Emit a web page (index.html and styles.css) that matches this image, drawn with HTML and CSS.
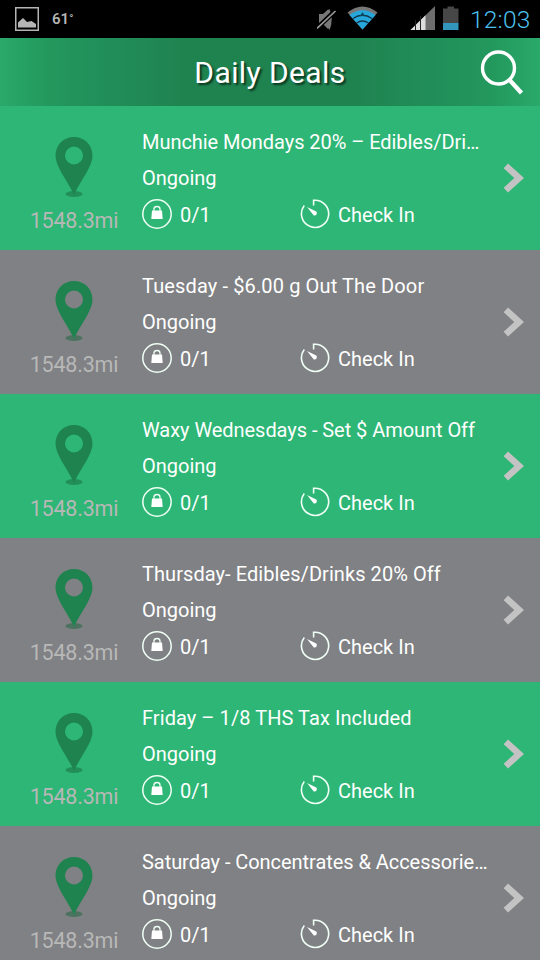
FILE: index.html
```html
<!DOCTYPE html>
<html lang="en">
<head>
<meta charset="utf-8">
<title>Daily Deals</title>
<link rel="stylesheet" href="styles.css">
</head>
<body>
<svg class="defs" aria-hidden="true">
  <symbol id="pin" viewBox="0 0 40 62">
    <ellipse cx="20" cy="58" rx="8.500" ry="3" fill="#17663c" fill-opacity=".5"/>
    <path fill="#1f8350" fill-rule="evenodd" d="M20 1C9.500 1 1.500 9 1.500 19.500C1.500 30 11 41 20 58.500C29 41 38.500 30 38.500 19.500C38.500 9 30.500 1 20 1ZM20 10.500a9 9 0 1 1 0 18a9 9 0 1 1 0-18Z"/>
  </symbol>
  <symbol id="bag" viewBox="0 0 30 30">
    <circle cx="15" cy="15" r="14.200" fill="none" stroke="#effff5" stroke-width="1.500"/>
    <path d="M10 11.500H20L20.700 20H9.300Z" fill="#fff"/>
    <path d="M12 13V10a3 2.500 0 0 1 6 0V13" fill="none" stroke="#effff5" stroke-width="1.300"/>
  </symbol>
  <symbol id="timer" viewBox="0 0 30 30">
    <path d="M13.600 6.500V1.300A13.600 13.600 0 1 1 4.300 6.500" fill="none" stroke="#effff5" stroke-width="1.600"/>
    <path d="M7 8L16.200 12.600A2.300 2.300 0 0 1 13.800 16.400Z" fill="#fff"/>
  </symbol>
  <symbol id="chevron" viewBox="0 0 22 30">
    <path d="M3.800 2.800L17.200 15L3.800 27.200" fill="none" stroke="#c3c3c3" stroke-width="6.500"/>
  </symbol>
</svg>

<div class="status">
  <svg class="picture" viewBox="0 0 24 24"><rect x=".75" y=".75" width="22.500" height="22.500" fill="none" stroke="#b5b5b5" stroke-width="1.500"/><path d="M3 20.500V15.500L8 11L12 15L16.500 14L21 17V20.500Z" fill="#b5b5b5"/></svg>
  <span class="temp">61<span class="degree">°</span></span>
  <svg class="tray" viewBox="0 0 150 28">
    <path d="M2 9H6L11 4.500V24L6 19H2Z M12.500 4Q17 14 12.500 25L11 23V5Z" fill="#777"/>
    <path d="M0 23L18 6" stroke="#000" stroke-width="4.500"/>
    <path d="M0 23.500L18.500 6" stroke="#999" stroke-width="1.700"/>
    <path d="M45.500 24.500L30.500 7.500Q45.500-4.500 60.500 7.500Z" fill="#777"/>
    <path d="M45.500 24.500L32.500 10Q45.500 .5 58.500 10Z" fill="#27a8dd"/>
    <path d="M36 13.500Q45.500 7 55 13.500M39.500 18Q45.500 14 51.500 18" fill="none" stroke="#10384a" stroke-width="1.400"/>
    <path d="M43 11H48L45.500 7Z" fill="#10485f"/>
    <path d="M93.500 25L118 1V25Z" fill="#6d6d6d"/>
    <path d="M93.500 25L108.500 10.300V25Z" fill="#ddd"/>
    <path d="M98.500 15V25M103.500 11V25" stroke="#222" stroke-width="1"/>
    <path d="M126 3.500H130.500V1.500H137V3.500H141.500V18H126Z" fill="#474747"/>
    <path d="M126 18H141.500V25H126Z" fill="#3296bd"/>
  </svg>
  <span class="clock">12:03</span>
</div>

<header class="bar">
  <h1 class="heading">Daily Deals</h1>
  <svg class="search" viewBox="0 0 44 46"><circle cx="18.500" cy="18" r="16" fill="none" stroke="#fff" stroke-width="3.400"/><path d="M29.500 30L41.500 43" stroke="#fff" stroke-width="4.300"/></svg>
</header>

<main class="deals">
  <article class="deal">
    <div class="place"><svg class="pin"><use href="#pin"/></svg><span class="distance">1548.3mi</span></div>
    <div class="info">
      <h2 class="title tight">Munchie Mondays 20% – Edibles/Dri…</h2>
      <p class="when">Ongoing</p>
      <div class="stats"><svg class="icon"><use href="#bag"/></svg><span class="count">0/1</span><svg class="icon"><use href="#timer"/></svg><span class="check">Check In</span></div>
    </div>
    <svg class="chevron"><use href="#chevron"/></svg>
  </article>
  <article class="deal">
    <div class="place"><svg class="pin"><use href="#pin"/></svg><span class="distance">1548.3mi</span></div>
    <div class="info">
      <h2 class="title wide">Tuesday - $6.00 g Out The Door</h2>
      <p class="when">Ongoing</p>
      <div class="stats"><svg class="icon"><use href="#bag"/></svg><span class="count">0/1</span><svg class="icon"><use href="#timer"/></svg><span class="check">Check In</span></div>
    </div>
    <svg class="chevron"><use href="#chevron"/></svg>
  </article>
  <article class="deal">
    <div class="place"><svg class="pin"><use href="#pin"/></svg><span class="distance">1548.3mi</span></div>
    <div class="info">
      <h2 class="title tight">Waxy Wednesdays - Set $ Amount Off</h2>
      <p class="when">Ongoing</p>
      <div class="stats"><svg class="icon"><use href="#bag"/></svg><span class="count">0/1</span><svg class="icon"><use href="#timer"/></svg><span class="check">Check In</span></div>
    </div>
    <svg class="chevron"><use href="#chevron"/></svg>
  </article>
  <article class="deal">
    <div class="place"><svg class="pin"><use href="#pin"/></svg><span class="distance">1548.3mi</span></div>
    <div class="info">
      <h2 class="title loose">Thursday- Edibles/Drinks 20% Off</h2>
      <p class="when">Ongoing</p>
      <div class="stats"><svg class="icon"><use href="#bag"/></svg><span class="count">0/1</span><svg class="icon"><use href="#timer"/></svg><span class="check">Check In</span></div>
    </div>
    <svg class="chevron"><use href="#chevron"/></svg>
  </article>
  <article class="deal">
    <div class="place"><svg class="pin"><use href="#pin"/></svg><span class="distance">1548.3mi</span></div>
    <div class="info">
      <h2 class="title loose">Friday – 1/8 THS Tax Included</h2>
      <p class="when">Ongoing</p>
      <div class="stats"><svg class="icon"><use href="#bag"/></svg><span class="count">0/1</span><svg class="icon"><use href="#timer"/></svg><span class="check">Check In</span></div>
    </div>
    <svg class="chevron"><use href="#chevron"/></svg>
  </article>
  <article class="deal">
    <div class="place"><svg class="pin"><use href="#pin"/></svg><span class="distance">1548.3mi</span></div>
    <div class="info">
      <h2 class="title tight">Saturday - Concentrates &amp; Accessorie…</h2>
      <p class="when">Ongoing</p>
      <div class="stats"><svg class="icon"><use href="#bag"/></svg><span class="count">0/1</span><svg class="icon"><use href="#timer"/></svg><span class="check">Check In</span></div>
    </div>
    <svg class="chevron"><use href="#chevron"/></svg>
  </article>
</main>
</body>
</html>
```

FILE: styles.css
```css
* { box-sizing: border-box; }
html, body { height: 960px; overflow: hidden; }
body { margin: 0; width: 540px; background: #2db675; color: #fff; font-family: Roboto, sans-serif; }
h1, h2, p { margin: 0; font-weight: 400; }
svg { display: block; flex: none; }
.defs { display: none; }

.status { display: flex; align-items: center; height: 38px; padding-left: 15px; background: #000; }
.picture { width: 24px; height: 24px; }
.temp { width: 49px; margin-left: 13px; font-size: 15px; font-weight: 600; color: #b5b5b5; }
.degree { font-size: 11px; vertical-align: 2px; }
.tray { width: 150px; height: 28px; margin: 0 0 1px 216px; }
.clock { margin-left: 3px; padding-top: 1px; font-size: 24.5px; font-weight: 300; line-height: 38px; letter-spacing: .2px; color: #4bc0ee; white-space: nowrap; }

.bar { display: grid; grid-template-columns: 60px 1fr 60px; align-items: center; height: 68px; background: linear-gradient(90deg, #2aa96a 0%, #23985d 9%, #218e59 20%, #1f8350 34%, #1f8350 66%, #218e59 80%, #23985d 91%, #2aa96a 100%); }
.heading { grid-column: 2; padding-top: 2px; text-align: center; font-size: 30px; line-height: 66px; letter-spacing: .4px; text-shadow: 2px 2px 2px #0b3420; }
.search { width: 44px; height: 46px; margin-top: 1px; }

.deal { display: flex; align-items: flex-start; height: 144px; background: #2db675; }
.deal:nth-child(even) { background: #808184; }
.place { display: flex; flex-direction: column; align-items: center; width: 142px; padding: 30px 0 0 6px; }
.pin { width: 40px; height: 62px; }
.distance { margin-top: 9px; font-size: 21.5px; line-height: 28px; letter-spacing: -.2px; color: #b8b8b8; }
.info { flex: none; width: 360px; padding-top: 18px; font-size: 20px; white-space: nowrap; }
.title { font-size: 20px; line-height: 36px; }
.tight { letter-spacing: -.05px; }
.loose { letter-spacing: .07px; }
.wide { letter-spacing: .13px; }
.when { line-height: 36px; }
.stats { display: flex; align-items: center; height: 36px; }
.icon { width: 30px; height: 30px; }
.count { width: 120px; margin-left: 8px; padding-top: 2px; }
.check { margin-left: 8px; padding-top: 2px; }
.chevron { width: 22px; height: 30px; margin-top: 57px; }
```
